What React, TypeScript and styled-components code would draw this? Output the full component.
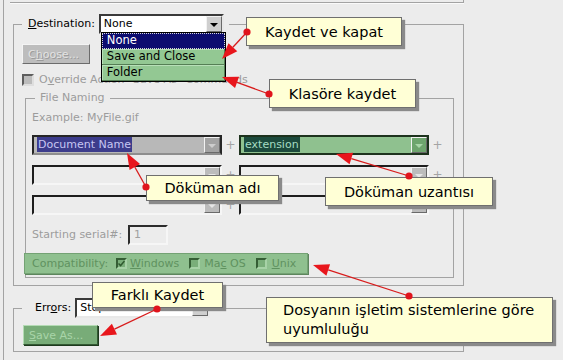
import * as React from 'react';
import styled, { createGlobalStyle, css } from 'styled-components';

const GlobalStyle = createGlobalStyle`
  html, body {
    margin: 0;
    padding: 0;
    background: #ececec;
  }
  body {
    font-family: "DejaVu Sans", "Liberation Sans", sans-serif;
  }
`;

type Tone = 'white' | 'blank' | 'gray' | 'green';

const selectTones = {
  white: css`
    background: #fff;
    border-color: #3a3a3a #e8e8e8 #e8e8e8 #3a3a3a;
  `,
  blank: css`
    background: #ececec;
    border-color: #1e1e1e #f6f6f6 #f6f6f6 #1e1e1e;
  `,
  gray: css`
    background: #b8b8b8;
    border-color: #262626 #262626 #8e8e8e #262626;
  `,
  green: css`
    background: #8fc18f;
    border-color: #1d321d;
  `,
};

const arrowTones = {
  white: { bg: '#cfcfcf', fg: '#000' },
  blank: { bg: '#bcbcbc', fg: '#e6e6e6' },
  gray: { bg: '#a3a3a3', fg: '#cdcdcd' },
  green: { bg: '#6ea56e', fg: '#a8d6a8' },
};

const Screen = styled.div`
  position: relative;
  width: 563px;
  height: 360px;
  overflow: hidden;
  background: #ececec;
  font-size: 11px;
  color: #000;
`;

const Frame = styled.div`
  box-sizing: border-box;
  margin-left: 3px;
  height: 100%;
  border-left: 1px solid #a3a3a3;
  padding-left: 9px;
`;

const UpperTail = styled.div`
  margin-left: -3px;
  width: 453px;
  height: 2px;
  border-bottom: 1px solid #a3a3a3;
  border-right: 1px solid #a3a3a3;
  box-shadow: 0 1px 0 #fafafa;
`;

const Group = styled.fieldset<{ $width: number }>`
  box-sizing: border-box;
  width: ${(p) => p.$width}px;
  min-width: 0;
  margin: 0;
  padding: 0;
  border: 1px solid #a3a3a3;
`;

const Legend = styled.legend<{ $indent: number; $padLeft: number }>`
  margin-left: ${(p) => p.$indent}px;
  padding: 0 5px 0 ${(p) => p.$padLeft}px;
`;

const LegendRow = styled.span`
  display: inline-flex;
  align-items: center;
  gap: 4px;
  vertical-align: top;
`;

const Label = styled.span<{ $muted?: boolean }>`
  color: ${(p) => (p.$muted ? '#9c9c9c' : '#000')};
  line-height: 14px;
  white-space: nowrap;
`;

const U = styled.span`
  text-decoration: underline;
`;

const SelectBox = styled.div<{ $width: number; $tone: Tone }>`
  position: relative;
  box-sizing: border-box;
  flex: none;
  width: ${(p) => p.$width}px;
  height: 20px;
  display: flex;
  align-items: center;
  border-style: solid;
  border-width: 2px;
  ${(p) => selectTones[p.$tone]}
`;

const SelectText = styled.div`
  flex: 1;
  padding-left: 3px;
  line-height: 16px;
  white-space: nowrap;
  overflow: hidden;
`;

const Highlight = styled.span<{ $tone: 'gray' | 'green' }>`
  padding: 1px 1px;
  background: ${(p) => (p.$tone === 'gray' ? '#3c3c8c' : '#1c4a3c')};
  color: ${(p) => (p.$tone === 'gray' ? '#c6c6f2' : '#a6dcc2')};
`;

const ArrowButton = styled.div<{ $tone: Tone }>`
  box-sizing: border-box;
  width: 16px;
  height: 16px;
  display: flex;
  align-items: center;
  justify-content: center;
  background: ${(p) => arrowTones[p.$tone].bg};
  border: 1px solid;
  border-color: #f2f2f2 #6a6a6a #6a6a6a #f2f2f2;
  &::after {
    content: '';
    border-left: 4px solid transparent;
    border-right: 4px solid transparent;
    border-top: 4px solid ${(p) => arrowTones[p.$tone].fg};
    margin-top: 1px;
  }
`;

const DropList = styled.div`
  position: absolute;
  top: 100%;
  left: 0;
  z-index: 5;
  box-sizing: border-box;
  width: 125px;
  border: 1px solid #000;
  background: #fff;
`;

const DropItem = styled.div<{ $selected?: boolean }>`
  box-sizing: border-box;
  height: 16px;
  padding-left: 5px;
  line-height: 15px;
  font-size: 11.5px;
  ${(p) =>
    p.$selected
      ? css`
          background: #0c0c70;
          color: #fff;
          outline: 1px dotted #d8d8d8;
          outline-offset: -1px;
        `
      : css`
          background: #93c893;
          color: #000;
          box-shadow: inset -1px -1px 0 #557f55, inset 1px 1px 0 #b8e0b8;
        `}
`;

const Button = styled.div<{ $width: number; $green?: boolean }>`
  box-sizing: border-box;
  width: ${(p) => p.$width}px;
  height: 20px;
  display: flex;
  align-items: center;
  padding-left: 5px;
  border: 1px solid;
  ${(p) =>
    p.$green
      ? css`
          background: #78ac78;
          border-color: #b4dbb4 #345a34 #345a34 #b4dbb4;
          box-shadow: 1px 1px 0 #1e3a1e;
          color: #a9d5a9;
        `
      : css`
          background: #bdbdbd;
          border-color: #f4f4f4 #6c6c6c #6c6c6c #f4f4f4;
          color: #e2e2e2;
          text-shadow: 1px 1px 0 #9a9a9a;
        `}
`;

const CheckBox = styled.span<{ $tone: 'gray' | 'green'; $size: number }>`
  box-sizing: border-box;
  flex: none;
  width: ${(p) => p.$size}px;
  height: ${(p) => p.$size}px;
  display: inline-flex;
  align-items: center;
  justify-content: center;
  border: 2px solid;
  ${(p) =>
    p.$tone === 'gray'
      ? css`
          background: #bcbcbc;
          border-color: #5e5e5e #dedede #dedede #5e5e5e;
        `
      : css`
          background: #7aae7a;
          border-color: #355e35 #a7d2a7 #a7d2a7 #355e35;
        `}
`;

const OverrideRow = styled.div`
  display: flex;
  align-items: center;
  gap: 5px;
  height: 12px;
  margin: 10px 0 0 8px;
`;

const ButtonRow = styled.div<{ $top: number; $left: number }>`
  margin: ${(p) => p.$top}px 0 0 ${(p) => p.$left}px;
`;

const NamingBody = styled.div`
  padding: 6px 0 3px 6px;
`;

const NameRow = styled.div`
  display: flex;
  align-items: center;
  margin-top: 10px;
`;

const Plus = styled.span`
  width: 17px;
  text-align: center;
  color: #a4a4a4;
  font-size: 12px;
  line-height: 14px;
`;

const SerialRow = styled.div`
  display: flex;
  align-items: center;
  margin-top: 10px;
`;

const SerialLabel = styled(Label)`
  width: 96px;
`;

const SerialInput = styled.div`
  box-sizing: border-box;
  width: 40px;
  height: 20px;
  padding-left: 4px;
  border: 2px solid;
  border-color: #2c2c2c #f6f6f6 #f6f6f6 #2c2c2c;
  color: #a0a0a0;
  line-height: 16px;
`;

const CompatBar = styled.div`
  box-sizing: border-box;
  display: flex;
  align-items: center;
  width: 284px;
  height: 21px;
  margin: 8px 0 0 -8px;
  padding-left: 7px;
  background: #8fc08f;
  border: 1px solid #74a274;
  box-shadow: 1px 1px 0 #5d865d;
  color: #5f925f;
`;

const CompatItem = styled.span<{ $gap: number; $space: number }>`
  display: inline-flex;
  align-items: center;
  gap: ${(p) => p.$gap}px;
  margin-left: ${(p) => p.$space}px;
  line-height: 14px;
`;

const Callout = styled.div<{ $x: number; $y: number; $w: number; $h: number; $left?: boolean }>`
  position: absolute;
  left: ${(p) => p.$x}px;
  top: ${(p) => p.$y}px;
  width: ${(p) => p.$w}px;
  height: ${(p) => p.$h}px;
  box-sizing: border-box;
  z-index: 10;
  background: #ffffd6;
  border: 1px solid #6f6f6f;
  box-shadow: 3px 3px 1px #8a8a8a;
  font-family: "DejaVu Sans", sans-serif;
  font-size: 14.5px;
  color: #000;
  display: flex;
  ${(p) =>
    p.$left
      ? css`
          flex-direction: column;
          justify-content: center;
          padding-left: 16px;
          line-height: 19px;
        `
      : css`
          align-items: center;
          justify-content: center;
        `}
`;

const Arrows = styled.svg`
  position: absolute;
  left: 0;
  top: 0;
  z-index: 11;
  pointer-events: none;
`;

const Tick = () => (
  <svg width="7" height="7" viewBox="0 0 7 7">
    <path d="M0.5 3.5 L2.6 5.6 L6.5 1" fill="none" stroke="#2f5a2f" strokeWidth="1.5" />
  </svg>
);

const Select = ({
  width,
  tone,
  children,
}: {
  width: number;
  tone: Tone;
  children?: React.ReactNode;
}) => (
  <SelectBox $width={width} $tone={tone}>
    <SelectText>{children}</SelectText>
    <ArrowButton $tone={tone} />
  </SelectBox>
);

const arrows = [
  [247, 32, 222, 59],
  [269, 94, 222, 77],
  [146, 187, 127, 153],
  [409, 176, 336, 154],
  [157, 309, 100, 336],
  [409, 296, 313, 265],
];

const arrowHead = (x1: number, y1: number, x2: number, y2: number) => {
  const len = 16;
  const half = 6;
  const d = Math.hypot(x2 - x1, y2 - y1);
  const ux = (x2 - x1) / d;
  const uy = (y2 - y1) / d;
  const bx = x2 - ux * len;
  const by = y2 - uy * len;
  const px = -uy * half;
  const py = ux * half;
  return {
    bx,
    by,
    points: `${x2},${y2} ${bx + px},${by + py} ${bx - px},${by - py}`,
  };
};

const App: React.FC = () => {
  return (
    <>
      <GlobalStyle />
      <Screen>
        <Frame>
          <UpperTail />

          <Group $width={451} style={{ marginTop: 11 }}>
            <Legend $indent={8} $padLeft={6}>
              <LegendRow>
                <Label>
                  <U>D</U>estination:
                </Label>
                <SelectBox $width={125} $tone="white">
                  <SelectText>None</SelectText>
                  <ArrowButton $tone="white" />
                  <DropList>
                    <DropItem $selected>None</DropItem>
                    <DropItem>Save and Close</DropItem>
                    <DropItem>Folder</DropItem>
                  </DropList>
                </SelectBox>
              </LegendRow>
            </Legend>

            <ButtonRow $top={10} $left={8}>
              <Button $width={68}>
                C<U>h</U>oose...
              </Button>
            </ButtonRow>

            <OverrideRow>
              <CheckBox $tone="gray" $size={12} />
              <Label $muted>
                O<U>v</U>erride Action "Save As" Commands
              </Label>
            </OverrideRow>

            <Group $width={429} style={{ margin: '5px 0 7px 11px' }}>
              <Legend $indent={9} $padLeft={5}>
                <Label $muted>File Naming</Label>
              </Legend>
              <NamingBody>
                <Label $muted>Example: MyFile.gif</Label>

                <NameRow>
                  <Select width={190} tone="gray">
                    <Highlight $tone="gray">Document Name</Highlight>
                  </Select>
                  <Plus>+</Plus>
                  <Select width={190} tone="green">
                    <Highlight $tone="green">extension</Highlight>
                  </Select>
                  <Plus>+</Plus>
                </NameRow>
                <NameRow>
                  <Select width={190} tone="blank" />
                  <Plus>+</Plus>
                  <Select width={190} tone="blank" />
                  <Plus>+</Plus>
                </NameRow>
                <NameRow>
                  <Select width={190} tone="blank" />
                  <Plus>+</Plus>
                  <Select width={190} tone="blank" />
                  <Plus>+</Plus>
                </NameRow>

                <SerialRow>
                  <SerialLabel $muted>Starting serial#:</SerialLabel>
                  <SerialInput>1</SerialInput>
                </SerialRow>

                <CompatBar>
                  <span>Compatibility:</span>
                  <CompatItem $gap={3} $space={8}>
                    <CheckBox $tone="green" $size={11}>
                      <Tick />
                    </CheckBox>
                    <span>
                      <U>W</U>indows
                    </span>
                  </CompatItem>
                  <CompatItem $gap={4} $space={10}>
                    <CheckBox $tone="green" $size={11} />
                    <span>
                      Ma<U>c</U> OS
                    </span>
                  </CompatItem>
                  <CompatItem $gap={5} $space={10}>
                    <CheckBox $tone="green" $size={11} />
                    <span>
                      <U>U</U>nix
                    </span>
                  </CompatItem>
                </CompatBar>
              </NamingBody>
            </Group>
          </Group>

          <Group $width={451} style={{ marginTop: 12 }}>
            <Legend $indent={8} $padLeft={13}>
              <LegendRow>
                <Label>
                  Err<U>o</U>rs:
                </Label>
                <Select width={135} tone="white">
                  Stop For Errors
                </Select>
              </LegendRow>
            </Legend>
            <ButtonRow $top={7} $left={9} style={{ paddingBottom: 6 }}>
              <Button $width={75} $green>
                <U>S</U>ave As...
              </Button>
            </ButtonRow>
          </Group>
        </Frame>

        <Callout $x={246} $y={17} $w={156} $h={29}>
          Kaydet ve kapat
        </Callout>
        <Callout $x={269} $y={79} $w={147} $h={29}>
          Klasöre kaydet
        </Callout>
        <Callout $x={146} $y={175} $w={133} $h={26}>
          Döküman adı
        </Callout>
        <Callout $x={325} $y={177} $w={168} $h={29}>
          Döküman uzantısı
        </Callout>
        <Callout $x={92} $y={282} $w={131} $h={26}>
          Farklı Kaydet
        </Callout>
        <Callout $x={266} $y={297} $w={287} $h={46} $left>
          <span>Dosyanın işletim sistemlerine göre</span>
          <span>uyumluluğu</span>
        </Callout>

        <Arrows width={563} height={360}>
          {arrows.map(([x1, y1, x2, y2], i) => {
            const head = arrowHead(x1, y1, x2, y2);
            return (
              <g key={i}>
                <line x1={x1} y1={y1} x2={head.bx} y2={head.by} stroke="#d81c1c" strokeWidth={1.3} />
                <polygon points={head.points} fill="#e8161c" />
                <circle cx={x1} cy={y1} r={3.6} fill="#e0141c" />
              </g>
            );
          })}
        </Arrows>
      </Screen>
    </>
  );
};

export default App;
